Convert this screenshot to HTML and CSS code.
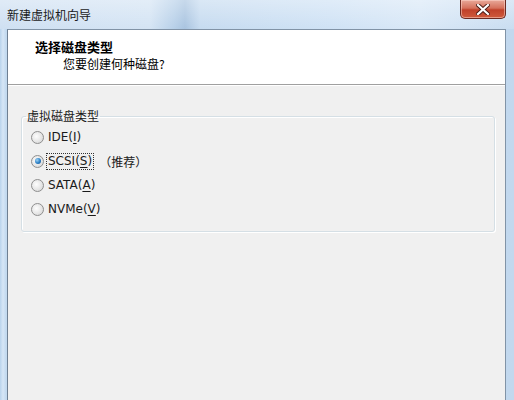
FILE: index.html
```html
<!DOCTYPE html>
<html lang="zh-CN">
<head>
<meta charset="utf-8">
<title>新建虚拟机向导</title>
<link rel="stylesheet" href="styles.css">
</head>
<body>
<div class="window">
  <div class="titlebar">
    <span class="title">新建虚拟机向导</span>
    <div class="close">
      <svg width="14" height="11" viewBox="0 0 14 11">
        <path d="M2 1 L12 10 M12 1 L2 10" stroke="#4a1a14" stroke-width="4" stroke-linecap="square"/>
        <path d="M2 1 L12 10 M12 1 L2 10" stroke="#ffffff" stroke-width="2.2" stroke-linecap="square"/>
      </svg>
    </div>
  </div>
  <div class="client">
    <div class="header">
      <div class="h-title">选择磁盘类型</div>
      <div class="h-sub">您要创建何种磁盘?</div>
    </div>
    <div class="body">
      <fieldset class="group">
        <legend>虚拟磁盘类型</legend>
        <div class="row"><span class="radio"></span><span class="label">IDE(<u>I</u>)</span></div>
        <div class="row"><span class="radio checked"></span><span class="label focus">SCSI(<u>S</u>)</span><span class="rec">（推荐）</span></div>
        <div class="row"><span class="radio"></span><span class="label">SATA(<u>A</u>)</span></div>
        <div class="row"><span class="radio"></span><span class="label">NVMe(<u>V</u>)</span></div>
      </fieldset>
    </div>
  </div>
</div>
</body>
</html>
```
FILE: styles.css
```css
html, body {
  margin: 0;
  padding: 0;
}
body {
  width: 514px;
  height: 400px;
  overflow: hidden;
  font-family: "Noto Sans CJK SC", "Noto Sans", sans-serif;
  font-size: 12px;
  color: #000;
}
.window {
  width: 514px;
  height: 400px;
  display: flex;
  flex-direction: column;
  background: linear-gradient(90deg, #b9d3ec 0px, #d6e6f6 3px, #c2d9ef 6px, #c7dcf1 50%, #c2d8ee 100%);
}
.titlebar {
  height: 29px;
  flex: none;
  display: flex;
  align-items: flex-start;
  justify-content: space-between;
  background:
    linear-gradient(180deg, rgba(255,255,255,0.35) 0, rgba(255,255,255,0) 100%),
    linear-gradient(90deg, #cfe0f2 0px, #d4e4f4 150px, #b6cfe8 175px, #a9c4e0 185px, #c6dbf0 200px, #cfe2f5 330px, #d9e8f7 420px, #c9ddf1 514px);
}
.title {
  margin: 8px 0 0 7px;
  line-height: 14px;
  font-size: 12px;
  color: #1a1a1a;
}
.close {
  width: 46px;
  height: 19px;
  margin-right: 8px;
  box-sizing: border-box;
  border: 1px solid #6b2a22;
  border-top: none;
  border-radius: 0 0 5px 5px;
  background: linear-gradient(180deg, #e9a99a 0%, #d5715c 45%, #c0412a 55%, #cf5a3c 100%);
  display: flex;
  align-items: center;
  justify-content: center;
  box-shadow: inset 0 0 0 1px rgba(255,220,210,0.5);
}
.client {
  flex: 1;
  display: flex;
  flex-direction: column;
  margin: 0 8px 0 7px;
  border-left: 1px solid #6e7f92;
  border-right: 1px solid #8193a6;
  border-top: 1px solid #8193a6;
}
.header {
  height: 55px;
  flex: none;
  background: #ffffff;
  border-bottom: 1px solid #a0a0a0;
  box-sizing: border-box;
  padding: 9px 0 0 27px;
}
.h-title {
  font-weight: bold;
  font-size: 13px;
  line-height: 16px;
}
.h-sub {
  margin: 1px 0 0 28px;
  line-height: 16px;
}
.body {
  flex: 1;
  background: #f0f0f0;
  padding: 22px 10px 0 13px;
  border-top: 1px solid #ffffff;
}
.group {
  margin: 0;
  padding: 1px 10px 10px 9px;
  border: 1px solid #d5dfe5;
  border-radius: 3px;
  box-shadow: inset 1px 1px 0 #ffffff, 1px 1px 0 #ffffff;
}
.group legend {
  margin-left: -5px;
  padding: 0 1px;
  line-height: 16px;
  color: #1a1a1a;
}
.row {
  height: 24px;
  display: flex;
  align-items: center;
}
.radio {
  width: 13px;
  height: 13px;
  box-sizing: border-box;
  border-radius: 50%;
  border: 1px solid #8f8f8f;
  background: radial-gradient(circle at 40% 40%, #fdfdfd 0, #e6e6e6 55%, #cfcfcf 100%);
  margin-right: 3px;
  flex: none;
  display: flex;
  align-items: center;
  justify-content: center;
}
.radio.checked::after {
  content: "";
  width: 6px;
  height: 6px;
  border-radius: 50%;
  background: radial-gradient(circle at 35% 35%, #9fd4f5 0, #2a7fc6 55%, #1a4f8a 100%);
}
.label {
  font-family: "DejaVu Sans", "Noto Sans CJK SC", sans-serif;
  line-height: 15px;
  padding: 0 1px;
  color: #1a1a1a;
}
.label u {
  text-underline-offset: 2px;
}
.label.focus {
  outline: 1px dotted #333;
}
.rec {
  margin-left: 6px;
  color: #1a1a1a;
}
```
